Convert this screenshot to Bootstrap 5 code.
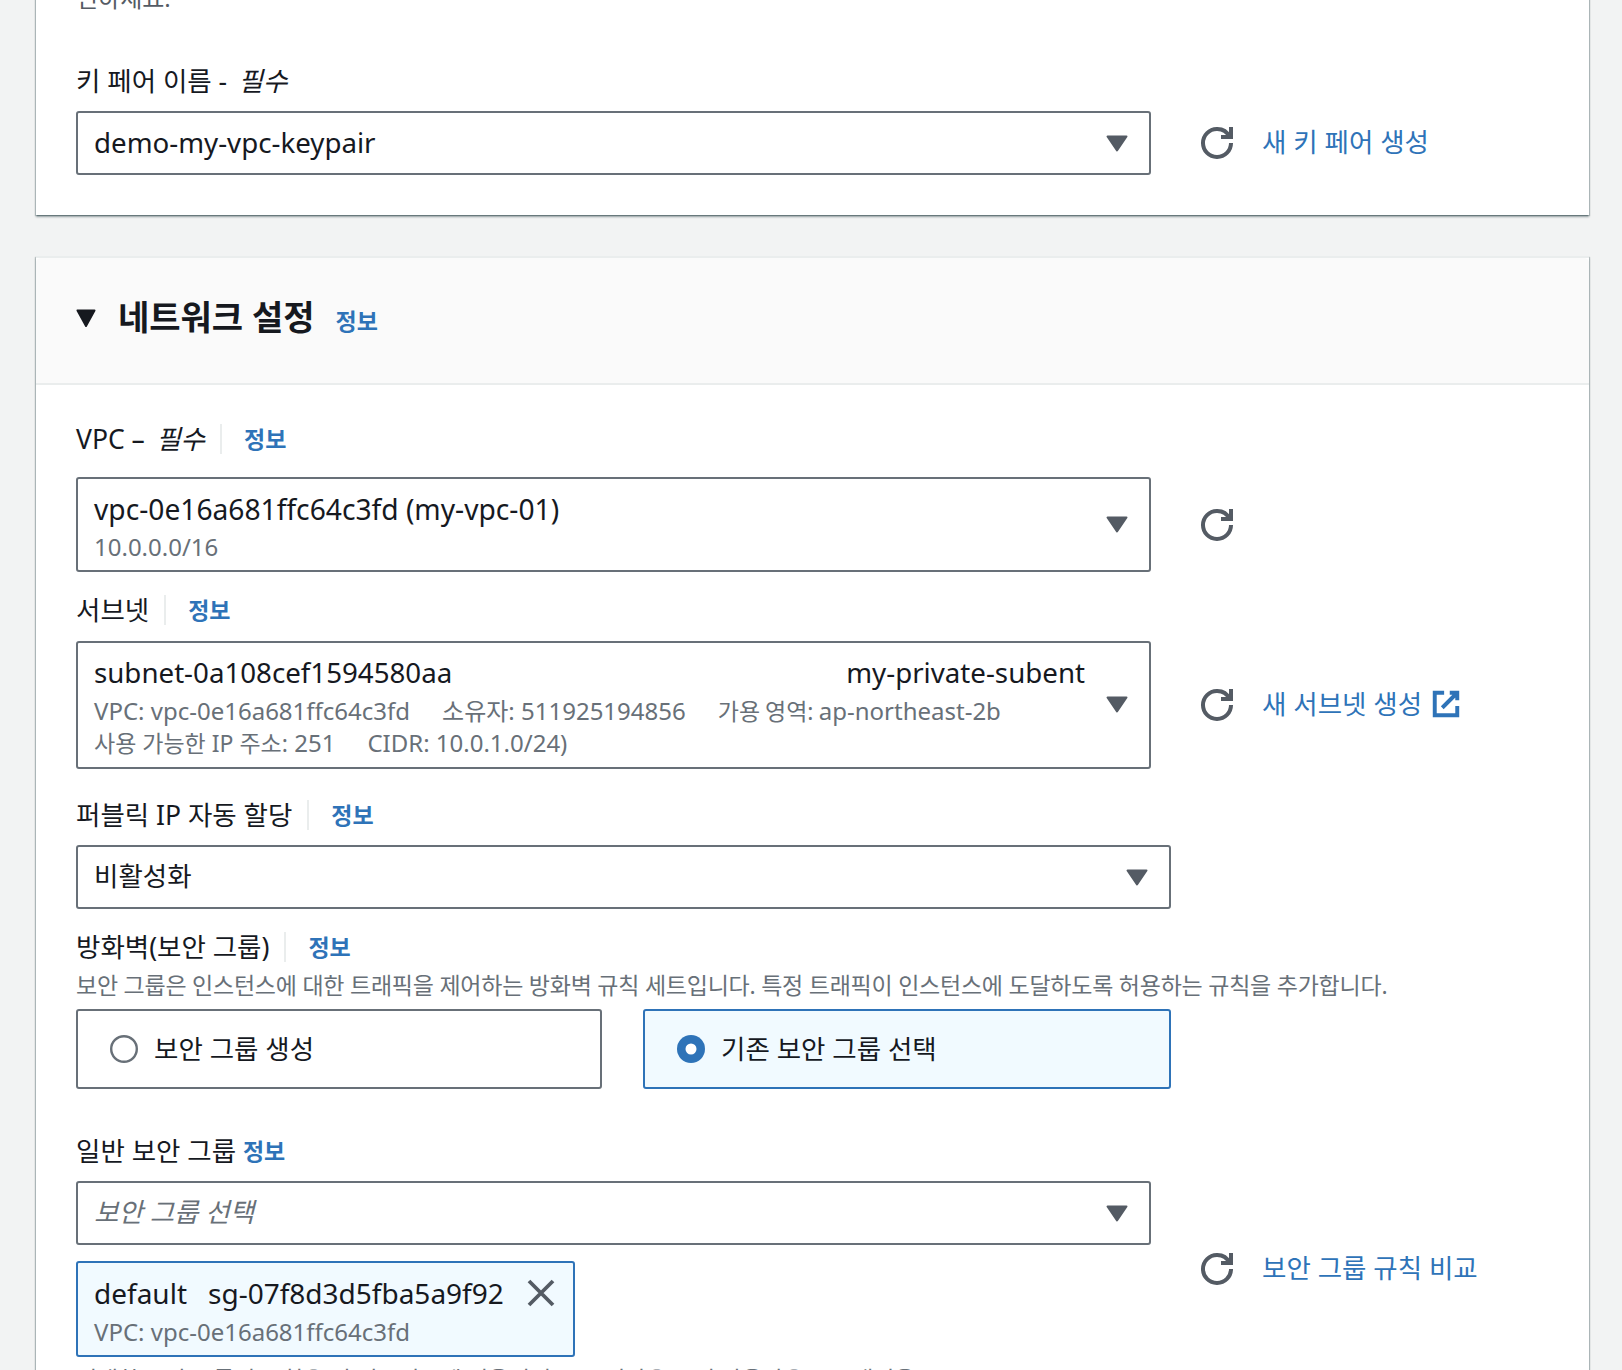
<!DOCTYPE html>
<html lang="ko">
<head>
<meta charset="utf-8">
<title>네트워크 설정</title>
<link href="https://cdn.jsdelivr.net/npm/bootstrap@5.3.0/dist/css/bootstrap.min.css" rel="stylesheet">
<style>
html,body{height:1370px;overflow:hidden}
body{background:#f2f3f3;color:#16191f;font-family:"Noto Sans","Noto Sans CJK KR",sans-serif;font-size:26.5px;line-height:36px}
.panel{margin:0 33px 0 36px;background:#fff;border:0;border-radius:0;box-shadow:0 2px 2px 0 rgba(0,28,36,.35),1px 1px 1px 0 rgba(0,28,36,.2),-1px 1px 1px 0 rgba(0,28,36,.2);--bs-card-bg:#fff}
.panel-key{margin-top:-16px;padding:0 40px 40px}
.cut-line{height:28px;line-height:28px;font-size:24px;color:#545b64}
.fld-label{height:36px;display:flex;align-items:center;font-size:26.5px}
.req{margin-left:4.5px}
.lbl-key{margin-top:51px;margin-bottom:12px}
.panel-net{margin-top:41px;border-top:2px solid #eaeded}
.panel-head{height:127px;background:#fafafa;border-bottom:2px solid #eaeded;padding:0 40px;display:flex;align-items:center;border-radius:0}
.tri-head{width:20px;height:19px;margin-right:22px;margin-top:-5px;flex:none}
.head-txt{font-size:34px;font-weight:700;margin:0;line-height:40px;margin-top:-8px}
.inf{color:#2e73b8;font-weight:700;font-size:23px;text-decoration:none;line-height:36px}
.head-inf{margin-left:21px;margin-top:1px}
.panel-main{padding:36px 40px 0}
.inf-sep{border-left:2px solid #eaeded;height:30px;margin:0 22px 0 15px}
.sel-box{border:2px solid #687078;border-radius:3px;background:#fff;display:flex;align-items:center;justify-content:space-between;padding:0 21px 0 16px;width:1075px;height:64px;font-size:27.7px}
.sel-wide{width:1095px}
.sel-text{flex:1;min-width:0;margin-top:-2px}
.sel-ko{font-size:26.5px}
.sel-ph{font-size:26.5px;color:#687078}
.sel-tall{align-items:flex-start}
.sel-tall .sel-text{margin-top:0}
.sel-tall .caret-ic{align-self:center;margin-left:21px;margin-top:-12px}
.pt-vpc{padding-top:12px;height:95px;font-size:28.2px}
.pt-vpc .sub-first{margin-top:4px}
.pt-sub{padding-top:11px;height:128px}
.sub-line{font-size:24px;line-height:32px;color:#687078;display:flex;column-gap:32px}
.ko-sm{font-size:23px}
.zone{word-spacing:-1px}
.sub-first{margin-top:5px}
.sub-name{display:flex;justify-content:space-between}
.caret-ic{width:22px;height:17px;flex:none}
.side{margin-left:50px;display:flex;align-items:center}
.ref-ic{width:32px;height:32px;flex:none}
.act{color:#2e73b8;text-decoration:none;font-size:26.5px;margin-left:29px;margin-top:-3px;white-space:nowrap}
.ext-ic{width:30px;height:30px;margin-left:9px;vertical-align:-5px}
.desc{font-size:23px;line-height:30px;color:#687078;margin-top:5px;margin-bottom:9px;letter-spacing:-.24px;white-space:nowrap}
.radio-row{display:flex;gap:41px;width:1095px}
.radio-tile{flex:1;height:80px;border:2px solid #687078;border-radius:3px;padding:0 0 0 32px;display:flex;align-items:center;margin:0;font-size:26.5px}
.radio-off{flex:none;width:526px}
.radio-on{border-color:#2e73b8;background:#f1faff}
.radio-dot{width:28px;height:28px;margin:0 16px 0 0;flex:none}
.chip{width:499px;height:96px;border:2px solid #2e73b8;border-radius:3px;background:#f1faff;margin-top:16px;padding:11px 18px 0 16px}
.chip-top{display:flex;justify-content:space-between;align-items:center;font-size:28px;line-height:38px}
.chip-close{width:28px;height:28px;flex:none;background:none;border:0;padding:0}
.chip-sg{margin-left:21px}
.chip .sub-line{margin-top:4px}
.tail{font-size:23px;line-height:30px;color:#687078;margin-top:7px;white-space:nowrap;letter-spacing:-.2px}
.gap-a{margin-top:20px;margin-bottom:13px}
.gap-b{margin-top:28px;margin-bottom:12px}
.gap-c{margin-top:20px}
.gap-d{margin-top:44px;margin-bottom:12px}
.gap-top{margin-bottom:20px}
</style>
</head>
<body>
<svg width="0" height="0" class="d-block">
<defs>
<symbol id="ic-ref" viewBox="0 0 16 16"><path d="M10 5h5V0" fill="none" stroke="#545b64" stroke-width="2"/><path d="M15 8a6.957 6.957 0 0 1-7 7 6.957 6.957 0 0 1-7-7 6.957 6.957 0 0 1 7-7 6.87 6.87 0 0 1 6.3 4" fill="none" stroke="#545b64" stroke-width="2"/></symbol>
<symbol id="ic-caret" viewBox="0 0 22 17"><path d="M1.5 1.5h19L11 15.5z" fill="#545b64" stroke="#545b64" stroke-width="2" stroke-linejoin="round"/></symbol>
</defs>
</svg>

<div class="card panel panel-key">
  <div class="cut-line">인하세요.</div>
  <label class="fld-label lbl-key">키 페어 이름 -&nbsp;<i class="req">필수</i></label>
  <div class="d-flex align-items-center">
    <div class="sel-box"><span class="sel-text">demo-my-vpc-keypair</span><svg class="caret-ic"><use href="#ic-caret"/></svg></div>
    <div class="side"><svg class="ref-ic"><use href="#ic-ref"/></svg><a class="act" href="#">새 키 페어 생성</a></div>
  </div>
</div>

<div class="card panel panel-net">
  <div class="card-header panel-head">
    <svg class="tri-head" viewBox="0 0 20 19"><path d="M1.5 1.5h17L10 17z" fill="#16191f" stroke="#16191f" stroke-width="2" stroke-linejoin="round"/></svg>
    <h2 class="head-txt">네트워크 설정</h2>
    <a class="inf head-inf" href="#">정보</a>
  </div>
  <div class="card-body panel-main">
    <label class="fld-label gap-top">VPC –&nbsp;<i class="req">필수</i><span class="inf-sep"></span><a class="inf" href="#">정보</a></label>
    <div class="d-flex align-items-center">
      <div class="sel-box sel-tall pt-vpc">
        <div class="sel-text"><div>vpc-0e16a681ffc64c3fd (my-vpc-01)</div><div class="sub-line sub-first">10.0.0.0/16</div></div>
        <svg class="caret-ic"><use href="#ic-caret"/></svg>
      </div>
      <div class="side"><svg class="ref-ic"><use href="#ic-ref"/></svg></div>
    </div>

    <label class="fld-label gap-a">서브넷<span class="inf-sep"></span><a class="inf" href="#">정보</a></label>
    <div class="d-flex align-items-center">
      <div class="sel-box sel-tall pt-sub">
        <div class="sel-text">
          <div class="sub-name"><span>subnet-0a108cef1594580aa</span><span>my-private-subent</span></div>
          <div class="sub-line sub-first"><span>VPC: vpc-0e16a681ffc64c3fd</span><span>소유자: 511925194856</span><span class="zone"><span class="ko-sm">가용 영역:</span> ap-northeast-2b</span></div>
          <div class="sub-line"><span><span class="ko-sm">사용 가능한 IP 주소:</span> 251</span><span>CIDR: 10.0.1.0/24)</span></div>
        </div>
        <svg class="caret-ic"><use href="#ic-caret"/></svg>
      </div>
      <div class="side"><svg class="ref-ic"><use href="#ic-ref"/></svg><a class="act" href="#">새 서브넷 생성<svg class="ext-ic" viewBox="0 0 16 16"><path d="M10 2h4v4M6 10l8-8M14 9v5H2V2h5" fill="none" stroke="#2e73b8" stroke-width="2.1"/></svg></a></div>
    </div>

    <label class="fld-label gap-b">퍼블릭 IP 자동 할당<span class="inf-sep"></span><a class="inf" href="#">정보</a></label>
    <div class="sel-box sel-wide"><span class="sel-text sel-ko">비활성화</span><svg class="caret-ic"><use href="#ic-caret"/></svg></div>

    <label class="fld-label gap-c mb-0">방화벽(보안 그룹)<span class="inf-sep"></span><a class="inf" href="#">정보</a></label>
    <p class="desc">보안 그룹은 인스턴스에 대한 트래픽을 제어하는 방화벽 규칙 세트입니다. 특정 트래픽이 인스턴스에 도달하도록 허용하는 규칙을 추가합니다.</p>
    <div class="radio-row">
      <label class="radio-tile radio-off"><svg class="radio-dot" viewBox="0 0 28 28"><circle cx="14" cy="14" r="12.8" fill="#fff" stroke="#687078" stroke-width="2.4"/></svg>보안 그룹 생성</label>
      <label class="radio-tile radio-on"><svg class="radio-dot" viewBox="0 0 28 28"><circle cx="14" cy="14" r="14" fill="#2e73b8"/><circle cx="14" cy="14" r="5.5" fill="#fff"/></svg>기존 보안 그룹 선택</label>
    </div>

    <label class="fld-label gap-d">일반 보안 그룹&nbsp;<a class="inf" href="#">정보</a></label>
    <div class="d-flex align-items-center">
      <div>
        <div class="sel-box"><i class="sel-text sel-ph">보안 그룹 선택</i><svg class="caret-ic"><use href="#ic-caret"/></svg></div>
        <div class="chip">
          <div class="chip-top"><span>default<span class="chip-sg">sg-07f8d3d5fba5a9f92</span></span>
            <button class="chip-close" type="button" aria-label="제거"><svg class="d-block" width="28" height="28" viewBox="0 0 28 28"><path d="M2 2l24 24M26 2L2 26" fill="none" stroke="#545b64" stroke-width="3.8"/></svg></button></div>
          <div class="sub-line">VPC: vpc-0e16a681ffc64c3fd</div>
        </div>
      </div>
      <div class="side"><svg class="ref-ic"><use href="#ic-ref"/></svg><a class="act" href="#">보안 그룹 규칙 비교</a></div>
    </div>
    <p class="tail">선택한 보안 그룹의 규칙은 이 인스턴스에 적용되며 모든 인바운드 및 아웃바운드 트래픽을</p>
  </div>
</div>
<script src="https://cdn.jsdelivr.net/npm/bootstrap@5.3.0/dist/js/bootstrap.bundle.min.js"></script>
</body>
</html>
